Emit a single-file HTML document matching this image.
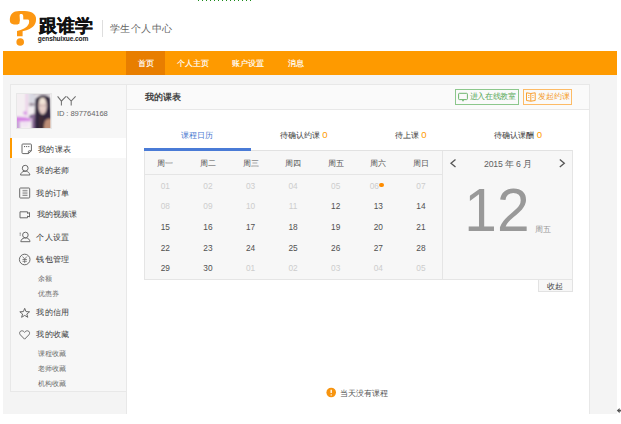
<!DOCTYPE html>
<html><head><meta charset="utf-8">
<style>
*{margin:0;padding:0;box-sizing:border-box}
html,body{width:621px;height:424px;overflow:hidden;background:#fff;font-family:"Liberation Sans",sans-serif;color:#555}
.a{position:absolute;white-space:nowrap}
.t{position:absolute;white-space:nowrap;line-height:1}
</style></head><body>
<!-- top dotted -->
<div class="a" style="left:198px;top:0;width:56px;height:1px;background:repeating-linear-gradient(90deg,#1d8b1d 0,#1d8b1d 1px,transparent 1px,transparent 4px)"></div>

<!-- logo -->
<svg class="a" style="left:0;top:0" width="40" height="50" viewBox="0 0 40 50">
  <path d="M19.3 23.7 C17 25 12 25 10.3 22.5 C9.3 19 10 14 14 12 C17 10.8 27 10.5 32 12.5 C35 14 36.5 17 36 20 C36 25 32 29 23.5 31 L22.6 31.2 L22.6 36.3 L17 36.3 L17 31 C22 30 27 28 28.9 23.5 C29.5 21 29 19.5 27.8 19.6 L23.3 19.5 L23.2 16 C23.1 14.5 22 14 21.3 14.1 C20 14.2 19.6 14.5 19.6 15.5 L19.9 20.3 Z" fill="#fc9712"/>
  <circle cx="20.2" cy="42" r="3.8" fill="#fc9712"/>
</svg>
<div class="t" style="left:39px;top:17.3px;font-size:18px;font-weight:bold;color:#111;-webkit-text-stroke:0.3px #111;letter-spacing:0.2px">跟谁学</div>
<div class="t" style="left:37.8px;top:35.8px;font-size:6.6px;font-weight:bold;color:#1a1a1a;letter-spacing:-0.12px">genshuixue.com</div>
<div class="a" style="left:102px;top:20px;width:1px;height:17px;background:#dedede"></div>
<div class="t" style="left:109.5px;top:24.2px;font-size:10px;color:#666;letter-spacing:0.55px">学生个人中心</div>

<!-- nav -->
<div class="a" style="left:3px;top:51px;width:614px;height:24px;background:#fe9a00"></div>
<div class="a" style="left:126px;top:51px;width:39px;height:24px;background:#e87e00"></div>
<div class="t" style="left:137.5px;top:59.8px;font-size:8px;color:#fff;-webkit-text-stroke:0.15px #fff">首页</div>
<div class="t" style="left:177px;top:59.8px;font-size:8px;color:#fff;-webkit-text-stroke:0.15px #fff">个人主页</div>
<div class="t" style="left:232px;top:59.8px;font-size:8px;color:#fff;-webkit-text-stroke:0.15px #fff">账户设置</div>
<div class="t" style="left:288px;top:59.8px;font-size:8px;color:#fff;-webkit-text-stroke:0.15px #fff">消息</div>

<!-- page bg -->
<div class="a" style="left:3px;top:75px;width:614px;height:339px;background:#f4f4f4"></div>

<!-- sidebar -->
<div class="a" style="left:10px;top:84px;width:117px;height:308px;background:#f7f7f7;border:1px solid #e8e8e8"></div>
<div class="a" style="left:16px;top:93px;width:35.5px;height:36px;border:1px solid #e8e8e8;background:#fff;overflow:hidden">
  <svg width="33.5" height="34" viewBox="17 94 33 34" preserveAspectRatio="none" style="display:block">
    <defs><filter id="bl" x="-10%" y="-10%" width="120%" height="120%"><feGaussianBlur stdDeviation="0.9"/></filter>
    <clipPath id="cp"><rect x="17" y="94" width="33" height="34"/></clipPath></defs>
    <g clip-path="url(#cp)"><g filter="url(#bl)">
      <rect x="12" y="90" width="42" height="42" fill="#f4eff2"/>
      <rect x="25.5" y="90" width="2" height="26" fill="#eacbe6"/>
      <rect x="28.5" y="90" width="7" height="17" fill="#d9d9e2"/>
      <rect x="33" y="90" width="20" height="5" fill="#cbc4cb"/>
      <rect x="29" y="103.5" width="5" height="1.8" fill="#806878"/>
      <path d="M35 100 C36 94.5 47 93.5 50 98 L52 132 L33 132 L34.5 112 Z" fill="#30263e"/>
      <ellipse cx="42.3" cy="106" rx="4.1" ry="8.4" fill="#e8d0c8"/>
      <ellipse cx="42" cy="101" rx="3" ry="3" fill="#f2e4d6"/>
      <path d="M39.6 105.5 h1.8 M43.4 105.5 h1.8" stroke="#7a6068" stroke-width="0.7"/>
      <path d="M41 111.8 h2.6" stroke="#c89a9a" stroke-width="0.7"/>
      <path d="M44.5 121 C47 118 51 118.5 52 120 L52 132 L42 132 Z" fill="#bd8e76"/>
      <rect x="38.5" y="116" width="5" height="16" fill="#3c2c36"/>
      <ellipse cx="25" cy="113" rx="2" ry="1.8" fill="#d890e6"/>
      <path d="M12 117.5 C18 116 26 117 31 119 L30 121.5 C24 121 18 122 12 122.5 Z" fill="#d684e4"/>
      <rect x="12" y="122" width="8" height="8" fill="#caa2da"/>
      <ellipse cx="25" cy="124.5" rx="3.5" ry="2.2" fill="#f2e2f4"/>
      <circle cx="30.5" cy="116.5" r="1.5" fill="#574878"/>
      <rect x="31.5" y="114" width="3" height="20" fill="#8a6a98"/>
    </g></g>
  </svg>
</div>
<svg class="a" style="left:50px;top:90px" width="32" height="20" viewBox="50 90 32 20" fill="none" stroke="#707070" stroke-width="1.05">
  <path d="M57.6 96.4 L61.4 101.1 L66 96.4 M61.4 101.1 V105.6"/>
  <path d="M66.6 96.4 L71.2 101.1 L75.6 96.4 M71.2 101.1 V105.6"/>
</svg>
<div class="t" style="left:56.9px;top:109.9px;font-size:7.6px;color:#666;letter-spacing:-0.08px">ID : 897764168</div>

<!-- active menu -->
<div class="a" style="left:11px;top:138px;width:115px;height:20px;background:#fff"></div>
<div class="a" style="left:10px;top:138px;width:2px;height:20px;background:#fe9a00"></div>

<!-- icons -->
<svg class="a" style="left:0;top:130px" width="40" height="260" viewBox="0 130 40 260" fill="none" stroke="#6a6a6a" stroke-width="1">
  <!-- schedule -->
  <path d="M22.8 144 H30.6 Q31.4 144 31.4 144.8 V150.8 L28.4 153.6 H22.8 Q22 153.6 22 152.8 V144.8 Q22 144 22.8 144 Z M31.4 150.8 H29 Q28.4 150.8 28.4 151.4 V153.6"/>
  <g fill="#666" stroke="none"><rect x="24" y="146" width="1.1" height="1.1"/><rect x="26.1" y="146" width="1.1" height="1.1"/><rect x="28.2" y="146" width="1.1" height="1.1"/></g>
  <!-- person -->
  <circle cx="25.2" cy="168.2" r="2.9"/>
  <path d="M20.5 175 C20.8 172.8 22.5 171.6 24 171.3 H26.4 C27.9 171.6 29.6 172.8 29.9 175 Z"/>
  <!-- order -->
  <rect x="19.7" y="188" width="10" height="10" rx="0.8"/>
  <path d="M22.5 190.4 h5 M22.5 192.1 h5 M22.5 193.8 h5 M22.5 195.5 h5" stroke-width="0.7"/>
  <!-- video -->
  <path d="M20 211.8 H27.5 V213.5 L29.5 212.5 V217 L27.5 216 V217.8 H20 Z"/>
  <!-- settings person -->
  <circle cx="25.4" cy="235" r="2.8"/>
  <path d="M20.8 241.7 C21 239.5 22.6 238.3 24.2 238 H26.6 C28.2 238.3 29.8 239.5 30 241.7 Z"/>
  <path d="M19.6 233.2 h1.3 M19.6 235 h1.3" stroke-width="0.9"/>
  <!-- wallet -->
  <circle cx="24.7" cy="259.5" r="5.3"/>
  <path d="M22.5 256.5 L24.7 259 L26.9 256.5 M24.7 259 V263 M22.5 259.5 H26.9 M22.5 261.3 H26.9" stroke-width="0.8"/>
  <!-- star -->
  <path d="M24.7 308.3 L26 311.6 L29.6 311.8 L26.8 314 L27.8 317.3 L24.7 315.4 L21.6 317.3 L22.6 314 L19.8 311.8 L23.4 311.6 Z"/>
  <!-- heart -->
  <path d="M24.6 339.2 L20.3 334.8 C19 333.3 19.6 331 21.7 330.8 C23 330.7 24 331.5 24.6 332.4 C25.2 331.5 26.2 330.7 27.5 330.8 C29.6 331 30.2 333.3 28.9 334.8 Z"/>
</svg>

<div class="t" style="left:38.2px;top:145.5px;font-size:8px;color:#333;letter-spacing:0.25px">我的课表</div>
<div class="t" style="left:36.4px;top:167.0px;font-size:8px;color:#3a3a3a;letter-spacing:0.25px">我的老师</div>
<div class="t" style="left:36.4px;top:189.7px;font-size:8px;color:#3a3a3a;letter-spacing:0.25px">我的订单</div>
<div class="t" style="left:36.5px;top:211.3px;font-size:8px;color:#3a3a3a">我的视频课</div>
<div class="t" style="left:36.4px;top:234.0px;font-size:8px;color:#3a3a3a;letter-spacing:0.25px">个人设置</div>
<div class="t" style="left:36.4px;top:256.0px;font-size:8px;color:#3a3a3a;letter-spacing:0.25px">钱包管理</div>
<div class="t" style="left:38px;top:274.6px;font-size:7px;color:#6a6a6a">余额</div>
<div class="t" style="left:38px;top:289.7px;font-size:7px;color:#6a6a6a">优惠券</div>
<div class="t" style="left:36.4px;top:309.2px;font-size:8px;color:#3a3a3a;letter-spacing:0.25px">我的信用</div>
<div class="t" style="left:36.4px;top:331.0px;font-size:8px;color:#3a3a3a;letter-spacing:0.25px">我的收藏</div>
<div class="t" style="left:38px;top:349.6px;font-size:7px;color:#6a6a6a">课程收藏</div>
<div class="t" style="left:38px;top:365.1px;font-size:7px;color:#6a6a6a">老师收藏</div>
<div class="t" style="left:38px;top:379.7px;font-size:7px;color:#6a6a6a">机构收藏</div>

<!-- main panel -->
<div class="a" style="left:126px;top:84px;width:464px;height:330px;background:#fff;border:1px solid #e8e8e8;border-bottom:none"></div>
<div class="a" style="left:127px;top:85px;width:462px;height:25px;background:#fafafa;border-bottom:1px solid #e8e8e8"></div>
<div class="t" style="left:144.5px;top:92.5px;font-size:9px;color:#444;font-weight:bold;letter-spacing:0.3px">我的课表</div>

<!-- buttons -->
<div class="a" style="left:455px;top:89px;width:64px;height:16px;border:1px solid #8cc78c"></div>
<svg class="a" style="left:450px;top:85px" width="24" height="20" viewBox="450 85 24 20" fill="none" stroke="#6db56d" stroke-width="1">
  <rect x="458.6" y="93.3" width="8.8" height="6.3" rx="0.8"/>
  <path d="M463 100 V101.2" stroke-width="1.6"/>
</svg>
<div class="t" style="left:469.8px;top:92.5px;font-size:8px;color:#58a858;letter-spacing:-0.35px">进入在线教室</div>
<div class="a" style="left:523px;top:89px;width:49px;height:16px;border:1px solid #fdbb66"></div>
<svg class="a" style="left:520px;top:85px" width="20" height="20" viewBox="520 85 20 20" fill="none" stroke="#f9a030" stroke-width="1">
  <path d="M526.5 92.8 L530.8 93.5 L535.2 92.8 V100.5 L530.8 101.2 L526.5 100.5 Z M530.8 93.5 V101.2"/>
  <path d="M528 95.5 h1.5 M528 97.5 h1.5 M532.2 95.5 h1.5 M532.2 97.5 h1.5" stroke-width="0.7"/>
</svg>
<div class="t" style="left:537.8px;top:93px;font-size:7.7px;color:#f59a1f">发起约课</div>

<!-- tabs -->
<div class="t" style="left:181px;top:132px;font-size:8.1px;color:#4778d0">课程日历</div>
<div class="t" style="left:279.6px;top:131px;font-size:8px;color:#3a3a3a">待确认约课 <span style="color:#fe9a00;font-size:9.6px;line-height:8px;margin-left:0.5px">0</span></div>
<div class="t" style="left:394.6px;top:131px;font-size:8px;color:#3a3a3a">待上课 <span style="color:#fe9a00;font-size:9.6px;line-height:8px;margin-left:0.5px">0</span></div>
<div class="t" style="left:494px;top:131px;font-size:8px;color:#3a3a3a">待确认课酬 <span style="color:#fe9a00;font-size:9.6px;line-height:8px;margin-left:0.5px">0</span></div>

<!-- calendar -->
<div class="a" style="left:144px;top:150px;width:429px;height:130px;background:#f7f7f7;border:1px solid #e5e5e5;border-top-color:#e2e2e2"></div>
<div class="a" style="left:144px;top:148px;width:107px;height:3px;background:#4a7bd6"></div>
<div class="a" style="left:145px;top:174px;width:297px;height:1px;background:#e5e5e5"></div>
<div class="a" style="left:442px;top:151px;width:1px;height:128px;background:#e5e5e5"></div>
<div id="cal"><div class="t" style="left:145.3px;width:40px;text-align:center;top:160.3px;font-size:8px;color:#555">周一</div><div class="t" style="left:187.9px;width:40px;text-align:center;top:160.3px;font-size:8px;color:#555">周二</div><div class="t" style="left:230.5px;width:40px;text-align:center;top:160.3px;font-size:8px;color:#555">周三</div><div class="t" style="left:273.1px;width:40px;text-align:center;top:160.3px;font-size:8px;color:#555">周四</div><div class="t" style="left:315.7px;width:40px;text-align:center;top:160.3px;font-size:8px;color:#555">周五</div><div class="t" style="left:358.3px;width:40px;text-align:center;top:160.3px;font-size:8px;color:#555">周六</div><div class="t" style="left:400.9px;width:40px;text-align:center;top:160.3px;font-size:8px;color:#555">周日</div><div class="t" style="left:145.3px;width:40px;text-align:center;top:181.5px;font-size:8.3px;color:#cdcdcd">01</div><div class="t" style="left:187.9px;width:40px;text-align:center;top:181.5px;font-size:8.3px;color:#cdcdcd">02</div><div class="t" style="left:230.5px;width:40px;text-align:center;top:181.5px;font-size:8.3px;color:#cdcdcd">03</div><div class="t" style="left:273.1px;width:40px;text-align:center;top:181.5px;font-size:8.3px;color:#cdcdcd">04</div><div class="t" style="left:315.7px;width:40px;text-align:center;top:181.5px;font-size:8.3px;color:#cdcdcd">05</div><div class="t" style="left:354.3px;width:40px;text-align:center;top:181.5px;font-size:8.3px;color:#cdcdcd">06</div><div class="t" style="left:400.9px;width:40px;text-align:center;top:181.5px;font-size:8.3px;color:#cdcdcd">07</div><div class="t" style="left:145.3px;width:40px;text-align:center;top:202.1px;font-size:8.3px;color:#cdcdcd">08</div><div class="t" style="left:187.9px;width:40px;text-align:center;top:202.1px;font-size:8.3px;color:#cdcdcd">09</div><div class="t" style="left:230.5px;width:40px;text-align:center;top:202.1px;font-size:8.3px;color:#cdcdcd">10</div><div class="t" style="left:273.1px;width:40px;text-align:center;top:202.1px;font-size:8.3px;color:#cdcdcd">11</div><div class="t" style="left:315.7px;width:40px;text-align:center;top:202.1px;font-size:8.3px;color:#505050">12</div><div class="t" style="left:358.3px;width:40px;text-align:center;top:202.1px;font-size:8.3px;color:#505050">13</div><div class="t" style="left:400.9px;width:40px;text-align:center;top:202.1px;font-size:8.3px;color:#505050">14</div><div class="t" style="left:145.3px;width:40px;text-align:center;top:222.8px;font-size:8.3px;color:#505050">15</div><div class="t" style="left:187.9px;width:40px;text-align:center;top:222.8px;font-size:8.3px;color:#505050">16</div><div class="t" style="left:230.5px;width:40px;text-align:center;top:222.8px;font-size:8.3px;color:#505050">17</div><div class="t" style="left:273.1px;width:40px;text-align:center;top:222.8px;font-size:8.3px;color:#505050">18</div><div class="t" style="left:315.7px;width:40px;text-align:center;top:222.8px;font-size:8.3px;color:#505050">19</div><div class="t" style="left:358.3px;width:40px;text-align:center;top:222.8px;font-size:8.3px;color:#505050">20</div><div class="t" style="left:400.9px;width:40px;text-align:center;top:222.8px;font-size:8.3px;color:#505050">21</div><div class="t" style="left:145.3px;width:40px;text-align:center;top:243.6px;font-size:8.3px;color:#505050">22</div><div class="t" style="left:187.9px;width:40px;text-align:center;top:243.6px;font-size:8.3px;color:#505050">23</div><div class="t" style="left:230.5px;width:40px;text-align:center;top:243.6px;font-size:8.3px;color:#505050">24</div><div class="t" style="left:273.1px;width:40px;text-align:center;top:243.6px;font-size:8.3px;color:#505050">25</div><div class="t" style="left:315.7px;width:40px;text-align:center;top:243.6px;font-size:8.3px;color:#505050">26</div><div class="t" style="left:358.3px;width:40px;text-align:center;top:243.6px;font-size:8.3px;color:#505050">27</div><div class="t" style="left:400.9px;width:40px;text-align:center;top:243.6px;font-size:8.3px;color:#505050">28</div><div class="t" style="left:145.3px;width:40px;text-align:center;top:264.3px;font-size:8.3px;color:#505050">29</div><div class="t" style="left:187.9px;width:40px;text-align:center;top:264.3px;font-size:8.3px;color:#505050">30</div><div class="t" style="left:230.5px;width:40px;text-align:center;top:264.3px;font-size:8.3px;color:#cdcdcd">01</div><div class="t" style="left:273.1px;width:40px;text-align:center;top:264.3px;font-size:8.3px;color:#cdcdcd">02</div><div class="t" style="left:315.7px;width:40px;text-align:center;top:264.3px;font-size:8.3px;color:#cdcdcd">03</div><div class="t" style="left:358.3px;width:40px;text-align:center;top:264.3px;font-size:8.3px;color:#cdcdcd">04</div><div class="t" style="left:400.9px;width:40px;text-align:center;top:264.3px;font-size:8.3px;color:#cdcdcd">05</div><div class="a" style="left:379.4px;top:182.7px;width:4.8px;height:4.8px;border-radius:50%;background:#fe8c00"></div></div>

<!-- right date panel -->
<svg class="a" style="left:440px;top:150px" width="140" height="30" viewBox="440 150 140 30" fill="none" stroke="#555" stroke-width="1.3">
  <path d="M455.5 159.5 L451 163.3 L455.5 167"/>
  <path d="M559.8 159.5 L564.3 163.3 L559.8 167"/>
</svg>
<div class="t" style="left:484px;top:159.6px;font-size:8.7px;color:#606060;letter-spacing:-0.15px">2015 年 6 月</div>
<div class="t" style="left:464px;top:179px;font-size:62px;color:#999;transform:scaleX(0.945);transform-origin:6.6px 0">12</div>
<div class="t" style="left:534.5px;top:226px;font-size:8px;color:#999">周五</div>

<!-- collapse tab -->
<div class="a" style="left:538px;top:280px;width:35px;height:12px;background:#f7f7f7;border:1px solid #e2e2e2;border-top:none"></div>
<div class="t" style="left:547px;top:282.8px;font-size:8.2px;color:#444">收起</div>

<!-- no lesson -->
<svg class="a" style="left:320px;top:382px" width="20" height="20" viewBox="320 382 20 20">
  <circle cx="331.2" cy="392.5" r="4.8" fill="#f7940f"/>
  <path d="M331.2 389.8 V393" stroke="#fff" stroke-width="1.3"/>
  <circle cx="331.2" cy="394.9" r="0.7" fill="#fff"/>
</svg>
<div class="t" style="left:340.2px;top:390px;font-size:8px;color:#555">当天没有课程</div>

<!-- cursor arrow -->
<svg class="a" style="left:612px;top:404px" width="9" height="12" viewBox="612 404 9 12">
  <path d="M616.8 410.6 L619.6 407.9 L619.6 409.8 L621 409.8 L621 411.4 L619.6 411.4 L619.6 413.2 Z" fill="#555"/>
</svg>
</body></html>
